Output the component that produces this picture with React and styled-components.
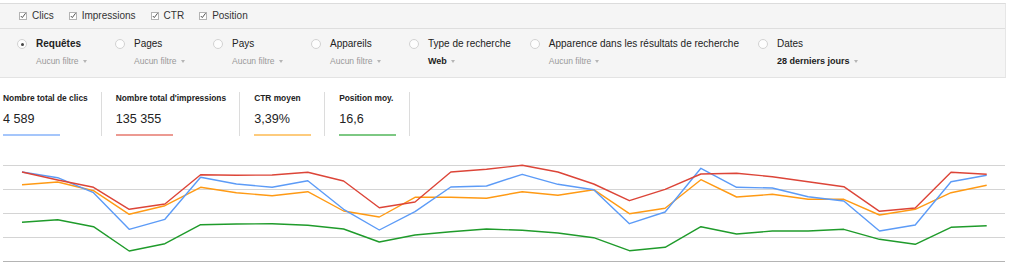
import styled, { createGlobalStyle } from "styled-components";

const GlobalStyle = createGlobalStyle`
  body {
    margin: 0;
    background: #fff;
    font-family: "Liberation Sans", Arial, sans-serif;
    color: #222;
  }
`;

const Page = styled.div`
  padding-top: 3px;
  width: 1010px;
`;

const FilterPanel = styled.div`
  width: 1006px;
  box-sizing: border-box;
  background: #f5f5f5;
  border-top: 1px solid #dcdcdc;
  border-bottom: 1px solid #e3e3e3;
  border-right: 1px solid #e6e6e6;
`;

const MetricToggles = styled.div`
  display: flex;
  align-items: center;
  height: 24px;
  padding-left: 19px;
  border-bottom: 1px solid #dedede;
`;

const Toggle = styled.label`
  display: flex;
  align-items: center;
  margin-right: 15px;
  font-size: 10px;
  line-height: 24px;
  color: #333;
`;

const CheckIcon = styled.svg`
  width: 8px;
  height: 9px;
  margin-right: 5px;
  margin-top: -1px;
`;

const Dimensions = styled.div`
  display: flex;
  align-items: flex-start;
  padding: 8px 0 10px 17px;
`;

const Dimension = styled.div`
  display: flex;
  align-items: flex-start;
  margin-right: 19px;
`;

const Radio = styled.span`
  position: relative;
  width: 10px;
  height: 10px;
  box-sizing: border-box;
  margin: 2px 9px 0 0;
  border-radius: 50%;
  border: 1px solid #d2d2d2;
  background: #fdfdfd;
  &::after {
    content: "";
    display: ${(p) => (p.checked ? "block" : "none")};
    position: absolute;
    left: 2.5px;
    top: 2.5px;
    width: 3px;
    height: 3px;
    border-radius: 50%;
    background: #444;
  }
`;

const DimensionText = styled.div`
  display: flex;
  flex-direction: column;
  min-width: 60px;
`;

const DimensionLabel = styled.span`
  font-size: 10px;
  line-height: 13px;
  font-weight: ${(p) => (p.active ? "bold" : "normal")};
  color: #222;
  white-space: nowrap;
`;

const FilterValue = styled.span`
  display: flex;
  align-items: center;
  margin-top: 5px;
  font-size: ${(p) => (p.strong ? "9px" : "8.5px")};
  line-height: 12px;
  font-weight: ${(p) => (p.strong ? "bold" : "normal")};
  color: ${(p) => (p.strong ? "#222" : "#999")};
  white-space: nowrap;
  &::after {
    content: "";
    margin-left: 4px;
    border-left: 2.5px solid transparent;
    border-right: 2.5px solid transparent;
    border-top: 3px solid #b5b5b5;
  }
`;

const Metrics = styled.div`
  display: flex;
  margin-top: 14px;
  padding-left: 3px;
`;

const MetricTile = styled.div`
  display: flex;
  flex-direction: column;
  padding: 0 13px 0 ${(p) => (p.first ? "0" : "14px")};
  border-right: 1px solid #dcdcdc;
  height: 44px;
`;

const MetricTitle = styled.span`
  font-size: 8.4px;
  line-height: 12px;
  font-weight: bold;
  color: #222;
  white-space: nowrap;
`;

const MetricValue = styled.span`
  margin-top: 7px;
  font-size: 12.6px;
  line-height: 16px;
  color: #222;
`;

const MetricBar = styled.span`
  display: block;
  width: 57px;
  height: 2px;
  margin-top: 7px;
  background: ${(p) => p.color};
`;

const Chart = styled.svg`
  display: block;
  margin: 14px 0 0 3px;
`;

const metrics = [
  { title: "Nombre total de clics", value: "4 589", bar: "#a5c6fb" },
  { title: "Nombre total d'impressions", value: "135 355", bar: "#ec9a92" },
  { title: "CTR moyen", value: "3,39%", bar: "#fdcb7d" },
  { title: "Position moy.", value: "16,6", bar: "#7dc883" },
];

const dimensions = [
  { label: "Requêtes", filter: "Aucun filtre", checked: true },
  { label: "Pages", filter: "Aucun filtre" },
  { label: "Pays", filter: "Aucun filtre" },
  { label: "Appareils", filter: "Aucun filtre" },
  { label: "Type de recherche", filter: "Web", strong: true },
  { label: "Apparence dans les résultats de recherche", filter: "Aucun filtre" },
  { label: "Dates", filter: "28 derniers jours", strong: true },
];

const series = [
  {
    color: "#1f9b2b",
    data: [222.3, 219.7, 226.7, 251, 243.7, 224.7, 224, 223.7, 225.3, 229, 242, 235, 231.7, 229, 230.3, 233, 237.7, 250.7, 247.3, 226.7, 234, 231, 231, 229.3, 239.3, 244.3, 227.3, 225.7],
  },
  {
    color: "#ff9a14",
    data: [184.7, 182, 190.7, 214.3, 205.7, 187.3, 192.7, 195.7, 191.7, 211, 217, 197.3, 197.3, 198.3, 191.7, 195.3, 189.7, 213.7, 208.3, 179.7, 197, 194.3, 199.3, 199.3, 215, 209.3, 192.7, 185.3],
  },
  {
    color: "#5c9bf7",
    data: [172, 177.7, 192.7, 229.3, 219.3, 177.3, 184, 187.3, 180.7, 209.3, 230, 211.7, 187, 186, 174.3, 184.3, 189.7, 223.7, 212, 168.3, 187.3, 188, 196.7, 201, 231, 225, 181.7, 175.3],
  },
  {
    color: "#dc4538",
    data: [172, 180, 187.3, 209.3, 204, 174.7, 175.3, 175, 172.3, 181, 207.7, 202, 172, 169.3, 165.3, 172, 184, 200.7, 189.3, 174, 173.3, 176.7, 181.7, 186.7, 211.3, 208, 172.3, 174.3],
  },
];

const gridLines = [165.5, 189.5, 213.5, 237.5, 261.5];

function points(data) {
  return data.map((y, i) => `${(22 + i * 35.73).toFixed(1)},${y}`).join(" ");
}

function Checkbox() {
  return (
    <CheckIcon viewBox="0 0 8 9">
      <rect x="0.5" y="1.5" width="7" height="7" fill="#fff" stroke="#b3b3b3" />
      <path d="M1.8 5 L3.3 6.6 L6.6 2.2" fill="none" stroke="#555" strokeWidth="1" />
    </CheckIcon>
  );
}

export default function App() {
  return (
    <Page>
      <GlobalStyle />
      <FilterPanel>
        <MetricToggles>
          {["Clics", "Impressions", "CTR", "Position"].map((name) => (
            <Toggle key={name}>
              <Checkbox />
              {name}
            </Toggle>
          ))}
        </MetricToggles>
        <Dimensions>
          {dimensions.map((d) => (
            <Dimension key={d.label}>
              <Radio checked={d.checked} />
              <DimensionText>
                <DimensionLabel active={d.checked}>{d.label}</DimensionLabel>
                <FilterValue strong={d.strong}>{d.filter}</FilterValue>
              </DimensionText>
            </Dimension>
          ))}
        </Dimensions>
      </FilterPanel>
      <Metrics>
        {metrics.map((m, i) => (
          <MetricTile key={m.title} first={i === 0}>
            <MetricTitle>{m.title}</MetricTitle>
            <MetricValue>{m.value}</MetricValue>
            <MetricBar color={m.bar} />
          </MetricTile>
        ))}
      </Metrics>
      <Chart width="1002" height="116" viewBox="3 150 1002 116">
        {gridLines.map((y, i) => (
          <line
            key={y}
            x1="3"
            x2="1005"
            y1={y}
            y2={y}
            stroke={i === gridLines.length - 1 ? "#b4b4b4" : "#d4d4d4"}
            strokeWidth="1"
          />
        ))}
        {series.map((s) => (
          <polyline
            key={s.color}
            points={points(s.data)}
            fill="none"
            stroke={s.color}
            strokeWidth="1.4"
            strokeLinejoin="round"
          />
        ))}
      </Chart>
    </Page>
  );
}
